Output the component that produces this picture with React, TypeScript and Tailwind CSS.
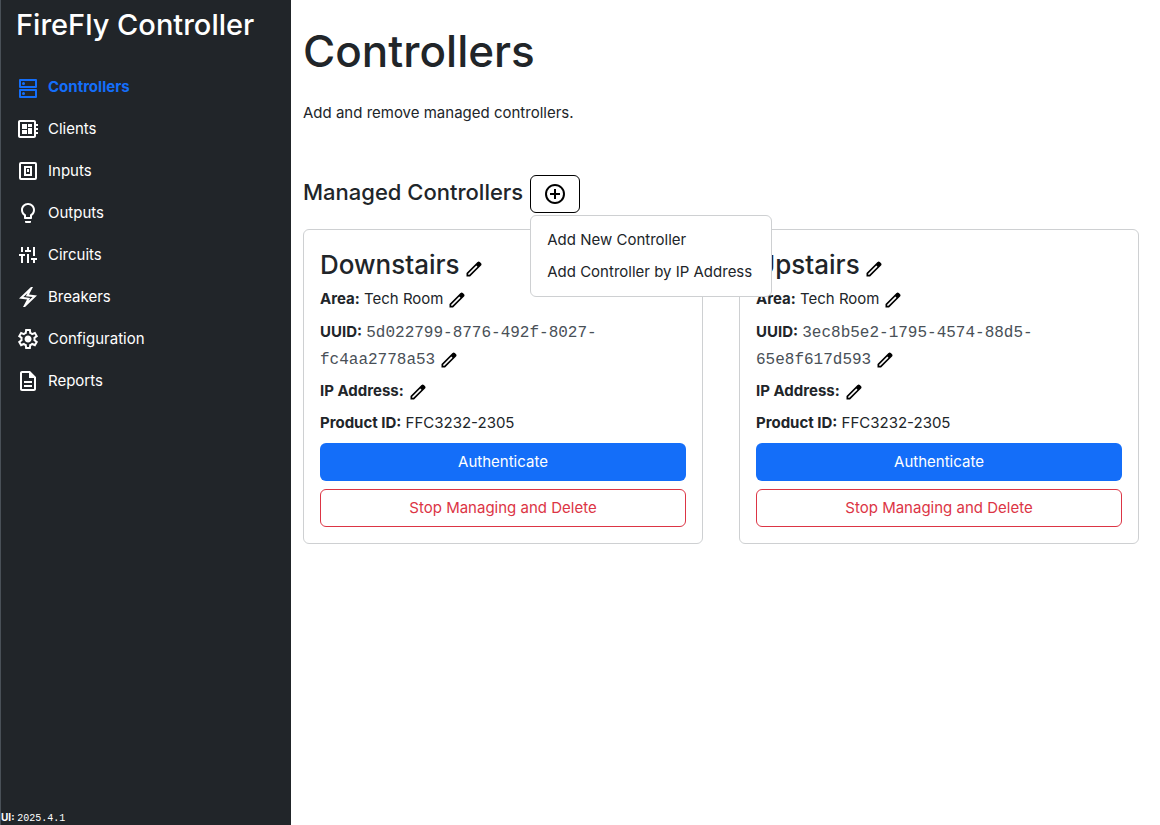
import { useState, type ReactNode } from "react";

function SymbolIcon({ d, className = "size-6" }: { d: string; className?: string }) {
  return (
    <svg viewBox="0 -960 960 960" fill="currentColor" aria-hidden="true" className={`${className} shrink-0`}>
      <path d={d} />
    </svg>
  );
}

function GridIcon({ d }: { d: string }) {
  return (
    <svg viewBox="0 0 24 24" fill="currentColor" aria-hidden="true" className="size-6 shrink-0">
      <path fillRule="evenodd" d={d} />
    </svg>
  );
}

const EDIT =
  "M200-200h57l391-391-57-57-391 391v57Zm-80 80v-170l528-527q12-11 26.5-17t30.5-6q16 0 31 6t26 18l55 56q12 11 17.5 26t5.5 30q0 16-5.5 30.5T817-647L290-120H120Z";
const ADD_CIRCLE =
  "M440-280h80v-160h160v-80H520v-160h-80v160H280v80h160v160Zm40 200q-83 0-156-31.5T197-197q-54-54-85.5-127T80-480q0-83 31.5-156T197-763q54-54 127-85.5T480-880q83 0 156 31.5T763-763q54 54 85.5 127T880-480q0 83-31.5 156T763-197q-54 54-127 85.5T480-80Zm0-80q134 0 227-93t93-227q0-134-93-227t-227-93q-134 0-227 93t-93 227q0 134 93 227t227 93Z";
const MIX =
  "M200-160v-280h-80v-80h240v80h-80v280h-80Zm0-440v-200h80v200h-80Zm160 0v-80h80v-120h80v120h80v80H360Zm80 440v-360h80v360h-80Zm240 0v-120h-80v-80h240v80h-80v120h-80Zm0-280v-360h80v360h-80Z";
const BOLT =
  "m280-80 160-300-320-40 480-460h80L520-580l320 40L360-80h-80Zm222-247 161-154-269-34 63-117-160 154 268 33-63 118Z";
const GEAR =
  "m370-80-16-128q-13-5-24.5-12T307-235l-119 50L78-375l103-78q-1-7-1-13.5v-27q0-6.5 1-13.5L78-585l110-190 119 50q11-8 23-15t24-12l16-128h220l16 128q13 5 24.5 12t22.5 15l119-50 110 190-103 78q1 7 1 13.5v27q0 6.5-2 13.5l103 78-110 190-118-50q-11 8-23 15t-24 12L590-80H370Zm70-80h79l14-106q31-8 57.5-23.5T639-327l99 41 39-68-86-65q5-14 7-29.5t2-31.5q0-16-2-31.5t-7-29.5l86-65-39-68-99 42q-22-23-48.5-38.5T533-694l-13-106h-79l-14 106q-31 8-57.5 23.5T321-633l-99-41-39 68 86 64q-5 15-7 30t-2 32q0 16 2 31t7 30l-86 65 39 68 99-42q22 23 48.5 38.5T427-266l13 106Zm42-180q58 0 99-41t41-99q0-58-41-99t-99-41q-59 0-99.5 41T342-480q0 58 40.5 99t99.5 41Z";
const SERVERS =
  "M4 4h16a1 1 0 0 1 1 1v7a1 1 0 0 1-1 1H4a1 1 0 0 1-1-1V5a1 1 0 0 1 1-1Zm1 2v5h14V6H5Zm2.500 1a1.500 1.500 0 1 1 0 3 1.500 1.500 0 0 1 0-3ZM4 14h16a1 1 0 0 1 1 1v7a1 1 0 0 1-1 1H4a1 1 0 0 1-1-1v-7a1 1 0 0 1 1-1Zm1 2v5h14v-5H5Zm2.500 1a1.500 1.500 0 1 1 0 3 1.500 1.500 0 0 1 0-3Z";
const BOARD =
  "M22 9V7h-2V5c0-1.100-.9-2-2-2H4c-1.100 0-2 .9-2 2v14c0 1.100.9 2 2 2h14c1.100 0 2-.9 2-2v-2h2v-2h-2v-2h2v-2h-2V9h2zm-4 10H4V5h14v14zM6 13h5v4H6zm6-6h4v3h-4zM6 7h5v5H6zm6 4h4v6h-4z";
const SWITCH =
  "M5 3h14a2 2 0 0 1 2 2v14a2 2 0 0 1-2 2H5a2 2 0 0 1-2-2V5a2 2 0 0 1 2-2Zm0 2v14h14V5H5Zm3 2h8v10H8V7Zm2 2v6h4V9h-4Zm1 1h2v3h-2v-3Z";
const BULB =
  "M9 20h6v1a1 1 0 0 1-1 1h-4a1 1 0 0 1-1-1v-1zm3-18C8.140 2 5 5.140 5 9c0 2.380 1.190 4.470 3 5.740V17c0 .55.45 1 1 1h6c.55 0 1-.45 1-1v-2.260c1.810-1.270 3-3.360 3-5.740 0-3.860-3.140-7-7-7zm2.850 11.100l-.85.6V16h-4v-2.300l-.85-.6C7.800 12.160 7 10.630 7 9c0-2.760 2.240-5 5-5s5 2.240 5 5c0 1.630-.8 3.160-2.150 4.100z";
const DOCUMENT =
  "M8 16h8v2H8zm0-4h8v2H8zm6-10H6c-1.100 0-2 .9-2 2v16c0 1.100.89 2 1.990 2H18c1.100 0 2-.9 2-2V8l-6-6zm4 18H6V4h7v5h5v11z";

const nav: { label: string; icon: ReactNode; active?: boolean }[] = [
  { label: "Controllers", icon: <GridIcon d={SERVERS} />, active: true },
  { label: "Clients", icon: <GridIcon d={BOARD} /> },
  { label: "Inputs", icon: <GridIcon d={SWITCH} /> },
  { label: "Outputs", icon: <GridIcon d={BULB} /> },
  { label: "Circuits", icon: <SymbolIcon d={MIX} /> },
  { label: "Breakers", icon: <SymbolIcon d={BOLT} /> },
  { label: "Configuration", icon: <SymbolIcon d={GEAR} /> },
  { label: "Reports", icon: <GridIcon d={DOCUMENT} /> },
];

const controllers = [
  { name: "Downstairs", area: "Tech Room", uuid: "5d022799-8776-492f-8027-fc4aa2778a53", product: "FFC3232-2305" },
  { name: "Upstairs", area: "Tech Room", uuid: "3ec8b5e2-1795-4574-88d5-65e8f617d593", product: "FFC3232-2305" },
];

function EditButton({ label }: { label: string }) {
  return (
    <button type="button" aria-label={label} className="-my-1 ml-1 inline-flex align-middle text-black">
      <SymbolIcon d={EDIT} className="size-5" />
    </button>
  );
}

function ControllerCard({ name, area, uuid, product }: (typeof controllers)[number]) {
  return (
    <article className="flex flex-col gap-2 rounded-md border border-[#ced0d2] bg-white p-4">
      <h3 className="flex h-[33px] items-center pt-1 text-[26px] font-medium">
        {name}
        <span className="flex pt-2">
          <EditButton label={`Edit name of ${name}`} />
        </span>
      </h3>
      <p className="h-6 leading-6">
        <strong className="font-bold">Area:</strong> {area}
        <EditButton label={`Edit area of ${name}`} />
      </p>
      <p className="h-[52px] leading-[26px]">
        <strong className="font-bold">UUID:</strong>{" "}
        <span className="font-['Liberation_Mono',monospace] text-[16px] text-[#495057]">{uuid}</span>
        <EditButton label={`Edit UUID of ${name}`} />
      </p>
      <p className="h-6 leading-6">
        <strong className="font-bold">IP Address:</strong>
        <EditButton label={`Edit IP address of ${name}`} />
      </p>
      <p className="h-6 leading-6">
        <strong className="font-bold">Product ID:</strong> {product}
      </p>
      <button type="button" className="h-[38px] rounded-md bg-[#146ef9] text-white">
        Authenticate
      </button>
      <button type="button" className="h-[38px] rounded-md border border-[#dc3545] text-[#dc3545]">
        Stop Managing and Delete
      </button>
    </article>
  );
}

export default function App() {
  const [open, setOpen] = useState(true);
  return (
    <div className="flex min-h-screen bg-white font-['Inter',sans-serif] text-[15px] text-[#212529]">
      <aside className="flex w-[calc(25%+1px)] shrink-0 flex-col border-l border-[#495057] bg-[#212529] text-white">
        <h2 className="px-[15px] pt-2 text-[29px] leading-[34px] font-medium">FireFly Controller</h2>
        <nav className="mt-[33px] flex flex-col gap-[18px] px-[15px]">
          {nav.map(({ label, icon, active }) => (
            <a
              key={label}
              href="#"
              aria-current={active ? "page" : undefined}
              className={`flex h-6 items-center gap-2 ${active ? "font-bold text-[#146ef9]" : ""}`}
            >
              {icon}
              {label}
            </a>
          ))}
        </nav>
        <p className="mt-auto text-[10px] leading-3">
          <strong>UI:</strong> <span className="font-['Liberation_Mono',monospace]">2025.4.1</span>
        </p>
      </aside>
      <main className="min-w-0 flex-1 pt-[22px] pr-[21px] pl-3">
        <h1 className="text-[44px] leading-[58px] font-medium">Controllers</h1>
        <p className="mt-[21px] leading-6">Add and remove managed controllers.</p>
        <div className="mt-[50px] flex items-center gap-[7px]">
          <h2 className="pb-1 text-[22px] leading-8 font-medium">Managed Controllers</h2>
          <div className="relative">
            <button
              type="button"
              aria-label="Add controller"
              aria-expanded={open}
              onClick={() => setOpen(!open)}
              className="flex h-[38px] w-[50px] items-center justify-center rounded-md border border-black text-black"
            >
              <SymbolIcon d={ADD_CIRCLE} />
            </button>
            {open && (
              <ul className="absolute top-10 left-0 z-10 min-w-[242px] rounded-md border border-[#ced0d2] bg-white py-2">
                {["Add New Controller", "Add Controller by IP Address"].map((item) => (
                  <li key={item}>
                    <button type="button" className="h-8 w-full px-4 text-left whitespace-nowrap">
                      {item}
                    </button>
                  </li>
                ))}
              </ul>
            )}
          </div>
        </div>
        <div className="mt-4 grid grid-cols-2 gap-9">
          {controllers.map((controller) => (
            <ControllerCard key={controller.name} {...controller} />
          ))}
        </div>
      </main>
    </div>
  );
}
